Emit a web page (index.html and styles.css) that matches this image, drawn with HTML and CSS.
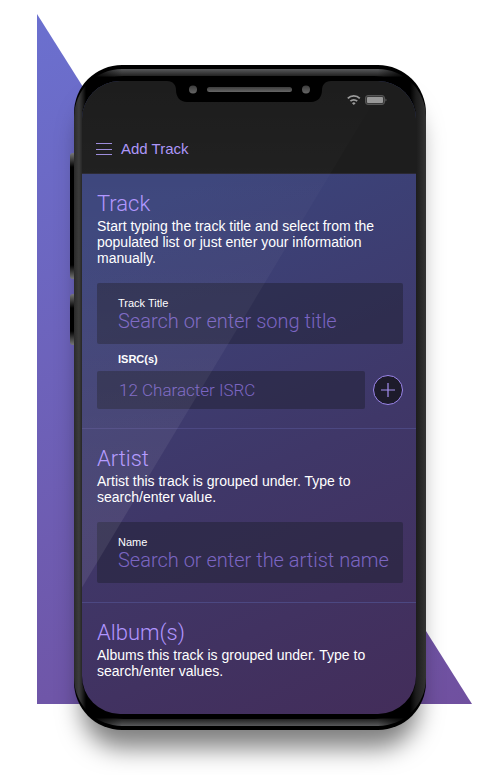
FILE: index.html
```
<!DOCTYPE html>
<html lang="en">
<head>
  <meta charset="UTF-8">
  <meta name="viewport" content="width=device-width, initial-scale=1.0">
  <title>Add Track</title>
  <link rel="stylesheet" href="styles.css">
</head>
<body>
  <main class="stage">
    <div class="triangle"></div>
    <div class="phone">
      <span class="side-btn volume"></span>
      <span class="side-btn power"></span>
      <div class="bezel">
        <div class="screen">
          <header class="top-bar">
            <svg class="status" width="41" height="12" viewBox="0 0 41 12" aria-hidden="true">
              <g fill="none" stroke="#9b9b9b" stroke-width="1.8">
                <path d="M0.8 4.4 A8.4 8.4 0 0 1 12.8 4.4"/>
                <path d="M3.4 7.2 A4.8 4.8 0 0 1 10.2 7.2"/>
              </g>
              <path d="M6.8 11 L5 9.2 A2.6 2.6 0 0 1 8.6 9.2 Z" fill="#9b9b9b"/>
              <rect x="18.5" y="1.5" width="19" height="9" rx="2.5" fill="#3a3a3a" stroke="#555"/>
              <rect x="20" y="3" width="16" height="6" rx="1" fill="#989898"/>
              <path d="M38.5 4.5 Q40.5 6 38.5 7.5 Z" fill="#666"/>
            </svg>
            <div class="title-row">
              <button type="button" class="menu-btn" aria-label="Menu">
                <svg width="16" height="14" viewBox="0 0 16 14">
                  <path d="M0 1.5H16M0 7.5H16M0 12.5H16" stroke="#9c8cdc" stroke-width="1"/>
                </svg>
              </button>
              <h1>Add Track</h1>
            </div>
          </header>

          <form class="track-form">
            <section>
              <h2>Track</h2>
              <p>Start typing the track title and select from the populated list or just enter your information manually.</p>
              <div class="field">
                <label for="trackTitle">Track Title</label>
                <input type="text" id="trackTitle" placeholder="Search or enter song title">
              </div>
              <label class="isrc-label" for="isrc">ISRC(s)</label>
              <div class="isrc-row">
                <input type="text" id="isrc" placeholder="12 Character ISRC">
                <button type="button" class="add-btn" aria-label="Add ISRC">
                  <svg width="14" height="14" viewBox="0 0 14 14">
                    <path d="M7 0V14M0 7H14" stroke="#a48ff0" stroke-width="1.2"/>
                  </svg>
                </button>
              </div>
            </section>

            <section>
              <h2>Artist</h2>
              <p>Artist this track is grouped under. Type to search/enter value.</p>
              <div class="field">
                <label for="artistName">Name</label>
                <input type="text" id="artistName" placeholder="Search or enter the artist name">
              </div>
            </section>

            <section>
              <h2>Album(s)</h2>
              <p>Albums this track is grouped under. Type to search/enter values.</p>
            </section>
          </form>
          <div class="glare"></div>
        </div>
      </div>
      <svg class="notch" width="164" height="26" viewBox="0 0 164 26" aria-hidden="true">
        <defs>
          <linearGradient id="metal" x1="0" y1="0" x2="0" y2="1">
            <stop offset="0" stop-color="#3c3c3c"/>
            <stop offset="1" stop-color="#666"/>
          </linearGradient>
        </defs>
        <path d="M0 0H164V5C158 5 155 9 155 14C155 21 151 26 144 26H20C13 26 9 21 9 14C9 9 6 5 0 5Z" fill="#000"/>
        <circle cx="26" cy="13.5" r="4" fill="url(#metal)"/>
        <rect x="40" y="11" width="85" height="5" rx="2.5" fill="url(#metal)"/>
        <circle cx="139" cy="13.5" r="4" fill="url(#metal)"/>
      </svg>
    </div>
  </main>
</body>
</html>
```
FILE: styles.css
```
* {
  box-sizing: border-box;
}
body {
  margin: 0;
  background: #fff;
  font-family: "Liberation Sans", Arial, sans-serif;
  color: #fff;
}
.stage {
  position: relative;
  padding: 65px 74px 45px;
  overflow: hidden;
}

/* triangle behind the phone */
.triangle {
  position: absolute;
  inset: 14px 28px 71px 37px;
  background: linear-gradient(160deg, #6b70cf, #70509f);
  clip-path: polygon(0 0, 100% 100%, 0 100%);
}

/* phone body */
.phone {
  position: relative;
  padding: 4px 0;
  border-radius: 48px;
  background: #000;
  box-shadow: 0 26px 24px -8px rgba(0, 0, 0, 0.5);
}
.bezel {
  position: relative;
  padding: 12px 10px 12px 8px;
  border-radius: 48px;
  background:
    linear-gradient(to right, #2a2a2a, #3c3c3c 5px, #262626 8px, #000 12px, transparent 48px, transparent calc(100% - 48px), #000 calc(100% - 16px), #1c1c1c calc(100% - 10px), #333),
    linear-gradient(#58595b, #222 7px, #000 8px, #000 calc(100% - 8px), #222 calc(100% - 7px), #58595b);
}
.bezel::before {
  content: "";
  position: absolute;
  inset: 7px 10px 7px 8px;
  border-radius: 42px;
  background: #000;
}
.side-btn {
  position: absolute;
  left: -4px;
  width: 6px;
  border-radius: 3px 0 0 3px;
  background: linear-gradient(#777, #000 14px, #000 calc(100% - 14px), #777);
}
.volume {
  top: 88px;
  height: 126px;
}
.power {
  top: 229px;
  height: 51px;
}
.notch {
  position: absolute;
  top: 11px;
  left: calc(50% - 83px);
}

/* screen */
.screen {
  position: relative;
  overflow: hidden;
  border-radius: 38px;
  background: linear-gradient(155deg, #3b447b 20%, #3f3768 60%, #432d5a);
}
.glare {
  position: absolute;
  inset: 0;
  background: linear-gradient(rgba(255, 255, 255, 0), rgba(255, 255, 255, 0.08) 70%);
  clip-path: polygon(0 0, 91% 0, 0 80%);
  pointer-events: none;
}
.top-bar {
  height: 93px;
  padding: 13px 28px 0 14px;
  background: #1d1d1d;
  border-bottom: 1px solid #2a2832;
}
.status {
  display: block;
  margin-left: auto;
}
.title-row {
  display: flex;
  align-items: center;
  gap: 9px;
  margin-top: 33px;
}
.menu-btn {
  display: flex;
  padding: 0;
  border: 0;
  background: none;
  cursor: pointer;
}
h1 {
  margin: 0;
  font-size: 15px;
  font-weight: normal;
  line-height: 20px;
  color: #ac95f8;
}

section {
  padding: 18px 13px 19px 15px;
  border-bottom: 1px solid #4c4882;
}
section:last-child {
  padding-bottom: 35px;
  border-bottom: 0;
}
h2 {
  margin: 0 0 2px;
  font-family: Roboto, "Liberation Sans", sans-serif;
  font-size: 22px;
  font-weight: 300;
  line-height: 24px;
  color: #b095ff;
}
p {
  margin: 0 0 17px;
  font-size: 14px;
  line-height: 16px;
}
section:last-child p {
  margin-bottom: 0;
}
label {
  display: block;
  font-size: 11px;
  line-height: 14px;
}
input {
  display: block;
  width: 100%;
  border: 0;
  outline: 0;
  background: none;
  font-family: Roboto, "Liberation Sans", sans-serif;
  font-weight: 300;
  color: #b095ff;
}
input::placeholder {
  color: #7b65c2;
  opacity: 1;
}
.field {
  padding: 13px 10px 12px 21px;
  border-radius: 2px;
  background: rgba(35, 34, 54, 0.55);
}
.field input {
  height: 22px;
  padding: 0;
  font-size: 20px;
}
.isrc-label {
  margin: 8px 21px 5px;
  font-weight: bold;
}
.isrc-row {
  display: flex;
  align-items: center;
  gap: 8px;
}
.isrc-row input {
  flex: 1;
  min-width: 0;
  height: 38px;
  padding: 0 22px;
  border-radius: 2px;
  background: rgba(35, 34, 54, 0.55);
  font-size: 17px;
}
.add-btn {
  display: flex;
  align-items: center;
  justify-content: center;
  width: 30px;
  height: 30px;
  padding: 0;
  border: 1px solid #9c86ec;
  border-radius: 50%;
  background: #1d1b2b;
  cursor: pointer;
}
```
